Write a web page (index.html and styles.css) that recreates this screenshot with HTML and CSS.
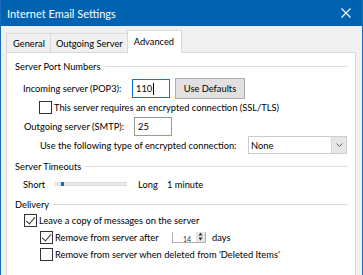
FILE: index.html
```html
<!DOCTYPE html>
<html lang="en">
<head>
    <meta charset="UTF-8">
    <title>Internet Email Settings</title>
    <link rel="stylesheet" href="styles.css">
</head>
<body>
    <div class="window">
        <div class="title-bar">
            <span class="title">Internet Email Settings</span>
            <svg class="close" width="10" height="10" viewBox="0 0 10 10">
                <path d="M0.5 0.5 L9.5 9.5 M9.5 0.5 L0.5 9.5" stroke="#fff" stroke-width="1.1" fill="none"/>
            </svg>
        </div>

        <div class="dialog">
            <div class="tabs">
                <div class="tab tab-general">General</div>
                <div class="tab">Outgoing Server</div>
                <div class="tab active">Advanced</div>
            </div>

            <div class="panel">
                <div class="group-title">Server Port Numbers</div>

                <div class="row row-incoming">
                    <span class="label">Incoming server (POP3):</span>
                    <div class="field focused">110<span class="caret"></span></div>
                    <div class="button">Use Defaults</div>
                </div>

                <div class="row row-ssl">
                    <span class="checkbox"></span>
                    <span>This server requires an encrypted connection (SSL/TLS)</span>
                </div>

                <div class="row row-outgoing">
                    <span class="label">Outgoing server (SMTP):</span>
                    <div class="field">25</div>
                </div>

                <div class="row row-encrypt">
                    <span class="label-long">Use the following type of encrypted connection:</span>
                    <div class="select">
                        <span class="select-value">None</span>
                        <span class="select-arrow">
                            <svg width="7" height="4" viewBox="0 0 7 4">
                                <path d="M0.5 0.5 L3.5 3.5 L6.5 0.5" stroke="#666" stroke-width="1" fill="none"/>
                            </svg>
                        </span>
                    </div>
                </div>

                <div class="group-title gap-group">Server Timeouts</div>

                <div class="row row-timeout">
                    <span class="short">Short</span>
                    <div class="slider"><span class="thumb"></span></div>
                    <span class="long">Long</span>
                    <span>1 minute</span>
                </div>

                <div class="group-title gap-group">Delivery</div>

                <div class="row row-leave">
                    <span class="checkbox checked"></span>
                    <span>Leave a copy of messages on the server</span>
                </div>

                <div class="row row-remove">
                    <span class="checkbox checked"></span>
                    <span class="remove-label">Remove from server after</span>
                    <div class="spin">
                        <span class="spin-value">14</span>
                        <span class="spin-arrows">
                            <svg width="5" height="9" viewBox="0 0 5 9">
                                <path d="M2.5 0.5 L4.5 3.5 L0.5 3.5 Z M2.5 8.5 L4.5 5.5 L0.5 5.5 Z" fill="#333"/>
                            </svg>
                        </span>
                    </div>
                    <span class="days">days</span>
                </div>

                <div class="row row-remove">
                    <span class="checkbox"></span>
                    <span>Remove from server when deleted from 'Deleted Items'</span>
                </div>
            </div>
        </div>
    </div>
</body>
</html>
```

FILE: styles.css
```css
body {
    margin: 0;
    width: 363px;
    height: 275px;
    overflow: hidden;
    font-family: 'Lato', 'Liberation Sans', sans-serif;
    font-size: 9.3px;
    color: #000;
    background: #f0f0f0;
    white-space: nowrap;
}

.window {
    height: 275px;
    border-left: 1px solid #1a6bb5;
    border-right: 1px solid #1a6bb5;
    background: #f0f0f0;
    box-sizing: border-box;
    overflow: hidden;
}

.title-bar {
    height: 26px;
    background: #0063b1;
    color: #fff;
    display: flex;
    align-items: center;
    justify-content: space-between;
    padding: 0 11px 0 6px;
}

.title {
    font-size: 11px;
}

.close {
    display: block;
}

.dialog {
    padding: 4px 6px 0 5px;
}

/* tabs */
.tabs {
    display: flex;
    align-items: flex-end;
    height: 22px;
    position: relative;
    z-index: 1;
}

.tab {
    height: 19px;
    line-height: 19px;
    padding: 0 4px 0 5px;
    border: 1px solid #d9d9d9;
    border-bottom: none;
    border-right: none;
    background: #f0f0f0;
    box-sizing: border-box;
}

.tab-general {
    padding: 0 5px 0 6px;
}

.tab.active {
    height: 23px;
    line-height: 21px;
    margin-bottom: -1px;
    background: #fff;
    border: 1px solid #d9d9d9;
    border-bottom: none;
    padding: 0 7px 0 6px;
}

.panel {
    background: #fff;
    border: 1px solid #d9d9d9;
    border-bottom: none;
    height: 223px;
    padding: 5px 7px 0 8px;
    box-sizing: border-box;
}

/* group headers */
.group-title {
    display: flex;
    align-items: center;
    height: 16px;
}

.group-title::after {
    content: "";
    flex: 1;
    height: 1px;
    background: #dcdcdc;
    margin-left: 4px;
}

.gap-group {
    margin-top: 4px;
}

.row {
    display: flex;
    align-items: center;
}

.row-incoming {
    height: 21px;
    margin-top: 4px;
    padding-left: 8px;
}

.label {
    width: 109px;
}

.field {
    width: 38px;
    height: 19px;
    border: 1px solid #7a7a7a;
    box-sizing: border-box;
    padding-left: 3px;
    line-height: 17px;
    display: flex;
    align-items: center;
}

.field.focused {
    border-color: #0078d7;
}

.caret {
    width: 1px;
    height: 12px;
    background: #000;
    margin-left: 1px;
}

.button {
    margin-left: 5px;
    width: 70px;
    height: 21px;
    background: #e1e1e1;
    border: 1px solid #adadad;
    box-sizing: border-box;
    display: flex;
    align-items: center;
    justify-content: center;
}

.row-ssl {
    height: 16px;
    padding-left: 24px;
}

.checkbox {
    width: 13px;
    height: 13px;
    border: 1px solid #333;
    box-sizing: border-box;
    margin-right: 2px;
    position: relative;
}

.checkbox.checked::after {
    content: "";
    position: absolute;
    left: 3px;
    top: 0px;
    width: 4px;
    height: 8px;
    border-right: 1px solid #333;
    border-bottom: 1px solid #333;
    transform: rotate(40deg);
}

.row-outgoing {
    height: 18px;
    margin-top: 2px;
    padding-left: 9px;
}

.row-outgoing .field {
    margin-left: 1px;
    border-color: #999;
}

.row-encrypt {
    height: 18px;
    margin-top: 1px;
    padding-left: 25px;
}

.label-long {
    width: 208px;
}

.select {
    width: 99px;
    height: 18px;
    border: 1px solid #cccccc;
    box-sizing: border-box;
    display: flex;
    align-items: center;
}

.select-value {
    flex: 1;
    padding-left: 2px;
}

.select-arrow {
    width: 14px;
    height: 16px;
    background: #e6e6e6;
    border-left: 1px solid #dadada;
    display: flex;
    align-items: center;
    justify-content: center;
}

.row-timeout {
    height: 16px;
    margin-top: 2px;
    padding-left: 8px;
}

.short {
    width: 32px;
}

.slider {
    width: 72px;
    height: 4px;
    background: #e7eaea;
    border: 1px solid #dcdcdc;
    box-sizing: border-box;
    position: relative;
}

.thumb {
    position: absolute;
    left: 5px;
    top: -1px;
    width: 3px;
    height: 4px;
    background: #0078d7;
}

.long {
    margin-left: 11px;
    width: 29px;
}

.row-leave {
    height: 16px;
    padding-left: 9px;
}

.row-remove {
    height: 16px;
    margin-top: 1px;
    padding-left: 25px;
}

.remove-label {
    width: 117px;
}

.spin {
    width: 34px;
    height: 11px;
    border: 1px solid #b0b0b0;
    border-top: none;
    box-sizing: border-box;
    display: flex;
    align-items: flex-end;
    overflow: hidden;
}

.spin-value {
    flex: 1;
    font-size: 7px;
    line-height: 6px;
    padding-left: 10px;
    color: #333;
}

.spin-arrows {
    width: 9px;
    height: 11px;
    background: #e6e6e6;
    display: flex;
    align-items: center;
    justify-content: center;
}

.days {
    margin-left: 6px;
}
```
